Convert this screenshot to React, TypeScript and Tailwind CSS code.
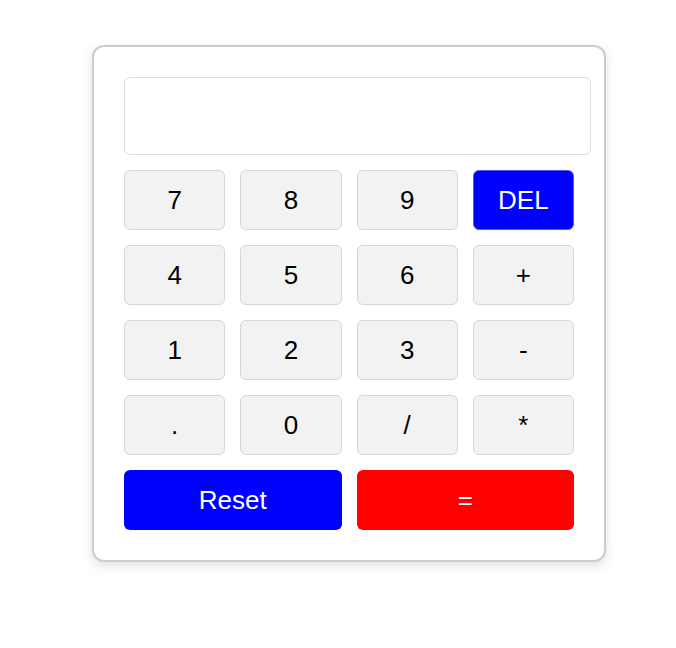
const keys = ["7", "8", "9", "DEL", "4", "5", "6", "+", "1", "2", "3", "-", ".", "0", "/", "*"];

export default function App() {
  return (
    <div className="min-h-[648px] bg-white pt-[45px] pl-[92px] font-['Liberation_Sans',Arial,sans-serif]">
      <div className="w-[514px] rounded-[12px] border-2 border-[#cccccc] bg-white p-[30px] shadow-[0_4px_12px_rgba(0,0,0,0.12)]">
        <div className="mb-[15px] h-[78px] w-[467px] rounded-[6px] border border-[#dddddd] bg-white" />
        <div className="grid grid-cols-4 gap-[15px]">
          {keys.map((k) => (
            <button
              key={k}
              className={`h-[60px] rounded-[6px] text-[26px] ${k === "DEL"
                ? "bg-[#0000ff] text-white border border-[#5555ff]"
                : "bg-[#f2f2f2] text-black border border-[#d6d6d6]"
                }`}
            >
              {k}
            </button>
          ))}
          <button className="col-span-2 h-[60px] rounded-[6px] bg-[#0000ff] text-[26px] text-white">Reset</button>
          <button className="col-span-2 h-[60px] rounded-[6px] bg-[#ff0000] text-[26px] text-white">=</button>
        </div>
      </div>
    </div>
  );
}
